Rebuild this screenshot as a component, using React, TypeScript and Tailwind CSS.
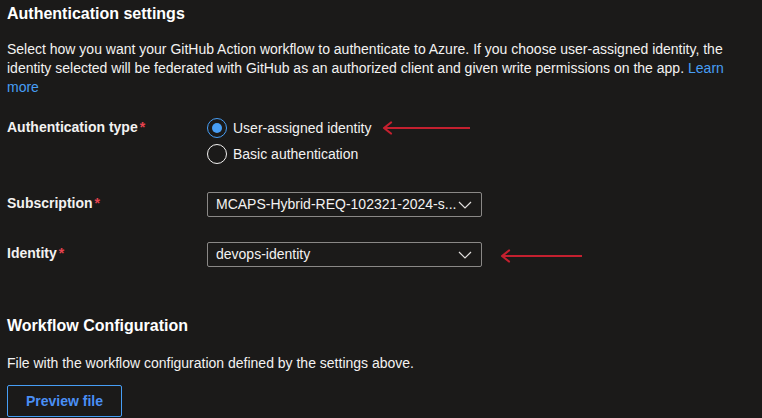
import React from "react";

const font = { fontFamily: '"Liberation Sans", Arial, sans-serif' };

function Chevron() {
  return (
    <svg width="14" height="8" viewBox="0 0 14 8" className="shrink-0">
      <path d="M1 1 L7 7 L13 1" fill="none" stroke="#e1dfdd" strokeWidth="1.2" />
    </svg>
  );
}

function Arrow({ width }: { width: number }) {
  return (
    <svg width={width} height="14" viewBox={`0 0 ${width} 14`}>
      <path d={`M2 7 L${width} 7`} stroke="#c4202f" strokeWidth="2.2" fill="none" />
      <path d="M9 1.5 L2 7 L9 12.5" stroke="#c4202f" strokeWidth="2.2" fill="none" strokeLinecap="round" strokeLinejoin="round" />
    </svg>
  );
}

function Label({ text }: { text: string }) {
  return (
    <div className="w-[200px] shrink-0 text-[14px] font-semibold text-[#f3f2f1]">
      {text}
      <span className="text-[#e8434f] ml-[2px]">*</span>
    </div>
  );
}

function Dropdown({ value }: { value: string }) {
  return (
    <div className="flex h-[25px] w-[275px] items-center justify-between border border-[#8a8886] rounded-[2px] pl-[8px] pr-[9px] text-[14px] text-[#f3f2f1]">
      <span>{value}</span>
      <Chevron />
    </div>
  );
}

function Radio({ checked, label }: { checked: boolean; label: string }) {
  return (
    <div className="flex h-[26px] items-center gap-[6px]">
      <div
        className={`flex h-[20px] w-[20px] items-center justify-center rounded-full border ${
          checked ? "border-[#479ef5]" : "border-[#f3f2f1]"
        }`}
      >
        {checked && <div className="h-[10px] w-[10px] rounded-full bg-[#479ef5]" />}
      </div>
      <span className="text-[14px] text-[#f3f2f1]">{label}</span>
    </div>
  );
}

export default function App() {
  return (
    <div
      className="relative h-[418px] w-[762px] overflow-hidden bg-[#1b1a19] pl-[7px] text-[#f3f2f1]"
      style={font}
    >
      <h2 className="mt-[2px] text-[16px] font-bold leading-[24px] text-white">Authentication settings</h2>
      <div className="mt-[14px] flex w-[740px] flex-col text-[14px] leading-[19px]">
        <span>
          Select how you want your GitHub Action workflow to authenticate to Azure. If you choose user-assigned identity, the
        </span>
        <div className="flex gap-[4px]">
          <span>
            identity selected will be federated with GitHub as an authorized client and given write permissions on the app.
          </span>
          <span className="text-[#479ef5]">Learn</span>
        </div>
        <span className="text-[#479ef5]">more</span>
      </div>

      <div className="mt-[18px] flex">
        <div className="flex h-[24px] items-center">
          <Label text="Authentication type" />
        </div>
        <div className="flex flex-col">
          <div className="flex items-center">
            <Radio checked label="User-assigned identity" />
            <div className="ml-[10px]">
              <Arrow width={88} />
            </div>
          </div>
          <Radio checked={false} label="Basic authentication" />
        </div>
      </div>

      <div className="mt-[25px] flex items-center">
        <div className="-mt-[2px]">
          <Label text="Subscription" />
        </div>
        <Dropdown value="MCAPS-Hybrid-REQ-102321-2024-s..." />
      </div>

      <div className="mt-[25px] flex items-center">
        <div className="-mt-[2px]">
          <Label text="Identity" />
        </div>
        <Dropdown value="devops-identity" />
        <div className="ml-[18px] mt-[3px]">
          <Arrow width={82} />
        </div>
      </div>

      <h2 className="mt-[47px] text-[16px] font-bold leading-[24px] text-white">Workflow Configuration</h2>
      <p className="mt-[16px] text-[14px] leading-[19px]">File with the workflow configuration defined by the settings above.</p>
      <button className="mt-[12px] flex h-[32px] w-[115px] items-center justify-center rounded-[2px] border border-[#479ef5] text-[14px] font-semibold text-[#4a8ff5]">
        Preview file
      </button>
    </div>
  );
}
